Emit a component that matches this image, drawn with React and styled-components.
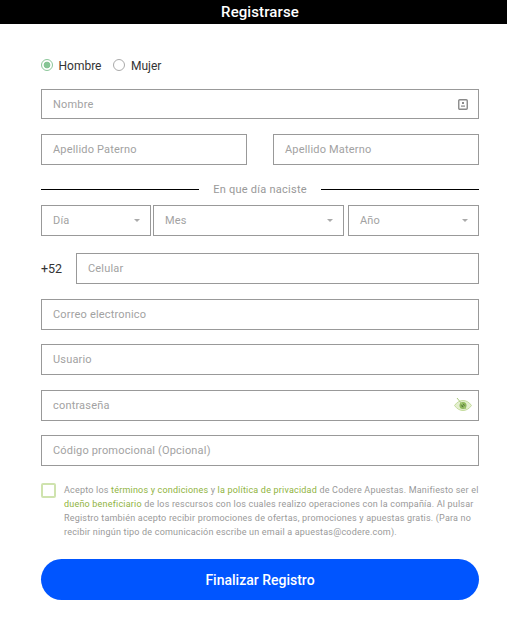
import React from "react";
import styled, { createGlobalStyle } from "styled-components";

const Global = createGlobalStyle`
  html, body { margin: 0; padding: 0; background: #fff; overflow: hidden; }
  body { font-family: Roboto, "Liberation Sans", sans-serif; }
`;

const Page = styled.div`
  width: 507px;
  height: 618px;
  display: flex;
  flex-direction: column;
`;

const Header = styled.header`
  height: 24px;
  flex: none;
  background: #000;
  color: #fff;
  font-size: 15px;
  font-weight: 500;
  letter-spacing: 0.1px;
  line-height: 24px;
  text-align: center;
  padding-left: 13px;
`;

const Form = styled.div`
  display: flex;
  flex-direction: column;
  padding: 33px 28px 0 41px;
`;

const GenderRow = styled.div`
  display: flex;
  align-items: center;
  height: 16px;
  margin-bottom: 16px;
`;

const RadioDot = styled.span`
  width: 12px;
  height: 12px;
  box-sizing: border-box;
  border-radius: 50%;
  border: 1px solid ${(p) => (p.$on ? "#8cc79a" : "#aaa")};
  background: ${(p) => (p.$on ? "radial-gradient(circle, #86c595 0 3px, #fff 3.7px)" : "#fff")};
  flex: none;
`;

const RadioLabel = styled.label`
  font-size: 12px;
  color: #333;
  margin-left: 5.5px;
  margin-right: 12px;
  position: relative;
  top: 1px;
`;

const Field = styled.div`
  height: ${(p) => p.$h || 31}px;
  box-sizing: border-box;
  border: 1px solid #999;
  display: flex;
  align-items: center;
  justify-content: space-between;
  padding: 0 10px 0 11px;
  font-size: 11px;
  letter-spacing: 0.18px;
  color: #a2a2a2;
  background: #fff;
  width: ${(p) => p.$w || "auto"};
  flex: ${(p) => (p.$grow ? 1 : "none")};
  margin-bottom: 14.5px;
`;

const SplitRow = styled.div`
  display: flex;
  justify-content: space-between;
`;

const Divider = styled.div`
  display: flex;
  align-items: center;
  height: 16px;
  margin: 2px 0 8px;
  font-size: 11px;
  letter-spacing: 0.25px;
  color: #999;
  gap: 14px;
  &::before, &::after {
    content: "";
    flex: 1;
    height: 1px;
    background: #000;
  }
`;

const SelectRow = styled.div`
  display: grid;
  grid-template-columns: 110px 191px 133px;
  column-gap: 2px;
  margin-bottom: 17px;
`;

const Select = styled(Field)`
  margin-bottom: 0;
  padding-right: 10px;
`;

const YearSelect = styled(Select)`
  margin-left: 2px;
`;

const Caret = styled.span`
  width: 0;
  height: 0;
  border-left: 3px solid transparent;
  border-right: 3px solid transparent;
  border-top: 3px solid #aaa;
`;

const PhoneRow = styled.div`
  display: flex;
  align-items: flex-start;
`;

const Prefix = styled.span`
  width: 35px;
  flex: none;
  line-height: 31px;
  font-size: 12.500px;
  color: #333;
`;

const TermsRow = styled.div`
  display: flex;
  margin-top: 2px;
`;

const Checkbox = styled.span`
  width: 15px;
  height: 15px;
  box-sizing: border-box;
  border: 2px solid #cfe3ae;
  border-radius: 2px;
  flex: none;
  margin-right: 8px;
`;

const Terms = styled.p`
  margin: 0;
  font-size: 9px;
  line-height: 14px;
  letter-spacing: 0.2px;
  color: #999;
  white-space: nowrap;
`;

const Green = styled.span`
  color: #8fb340;
`;

const Submit = styled.button`
  height: 41px;
  margin-top: 20.5px;
  border: none;
  border-radius: 21px;
  background: #0055ff;
  color: #fff;
  font-family: inherit;
  font-size: 14px;
  font-weight: 500;
`;

const IdIcon = () => (
  <svg width="10" height="11" viewBox="0 0 10 11">
    <rect x="0.75" y="0.75" width="8.5" height="9.5" rx="1" fill="none" stroke="#8a8a8a" strokeWidth="1.4" />
    <rect x="4" y="3" width="2" height="2" fill="#8a8a8a" />
    <rect x="3" y="6.5" width="4" height="1.2" fill="#8a8a8a" />
  </svg>
);

const EyeIcon = () => (
  <svg width="20" height="16" viewBox="0 0 20 16">
    <path d="M1.5 8.5C4 5 7 3.5 10 3.5s6 1.5 8.5 5c-2.500 3.500-5.500 5-8.500 5s-6-1.500-8.500-5z" fill="#e4efcf" stroke="#c4dc9c" strokeWidth="1" />
    <circle cx="10" cy="8.500" r="3.500" fill="#8fb85c" />
    <circle cx="10" cy="8.500" r="1.500" fill="#4f7433" />
    <path d="M4 1l9 11" stroke="#a9ca7c" strokeWidth="1" />
  </svg>
);

const PasswordField = styled(Field)`
  padding-right: 5px;
`;

export default function App() {
  return (
    <Page>
      <Global />
      <Header>Registrarse</Header>
      <Form>
        <GenderRow>
          <RadioDot $on />
          <RadioLabel>Hombre</RadioLabel>
          <RadioDot />
          <RadioLabel>Mujer</RadioLabel>
        </GenderRow>
        <Field $h={30}>
          Nombre
          <IdIcon />
        </Field>
        <SplitRow>
          <Field $w="206px">Apellido Paterno</Field>
          <Field $w="206px">Apellido Materno</Field>
        </SplitRow>
        <Divider>En que día naciste</Divider>
        <SelectRow>
          <Select>Día<Caret /></Select>
          <Select>Mes<Caret /></Select>
          <YearSelect>Año<Caret /></YearSelect>
        </SelectRow>
        <PhoneRow>
          <Prefix>+52</Prefix>
          <Field $grow>Celular</Field>
        </PhoneRow>
        <Field>Correo electronico</Field>
        <Field>Usuario</Field>
        <PasswordField>
          contraseña
          <EyeIcon />
        </PasswordField>
        <Field>Código promocional (Opcional)</Field>
        <TermsRow>
          <Checkbox />
          <Terms>
            Acepto los <Green>términos y condiciones</Green> y <Green>la política de privacidad</Green> de Codere Apuestas. Manifiesto ser el
            <br />
            <Green>dueño beneficiario</Green> de los rescursos con los cuales realizo operaciones con la compañía. Al pulsar
            <br />
            Registro también acepto recibir promociones de ofertas, promociones y apuestas gratis. (Para no
            <br />
            recibir ningún tipo de comunicación escribe un email a apuestas@codere.com).
          </Terms>
        </TermsRow>
        <Submit>Finalizar Registro</Submit>
      </Form>
    </Page>
  );
}
